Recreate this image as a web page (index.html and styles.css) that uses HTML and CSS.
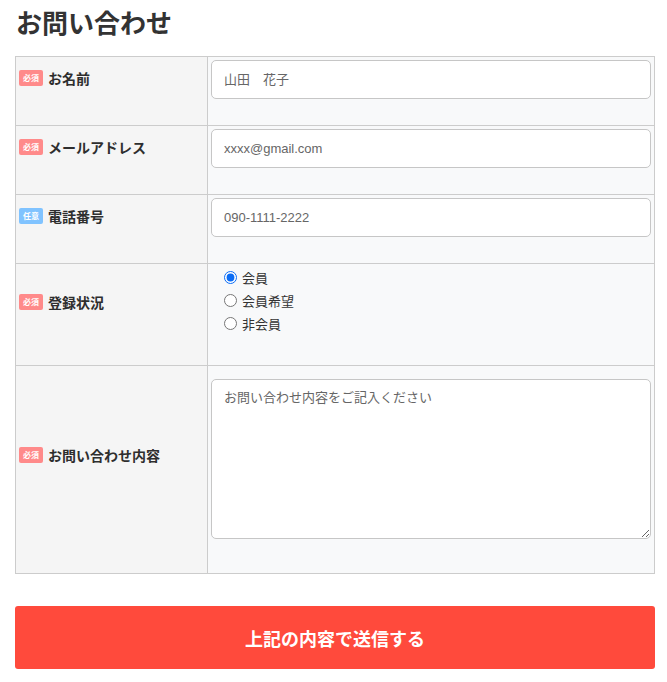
FILE: index.html
```html
<!DOCTYPE html>
<html lang="ja">
<head>
<meta charset="utf-8">
<title>お問い合わせ</title>
<link rel="stylesheet" href="styles.css">
</head>
<body>
<main class="page">
  <h1 class="page-title">お問い合わせ</h1>
  <form class="contact-form">
    <table class="form-table">
      <colgroup>
        <col class="col-label">
        <col class="col-field">
      </colgroup>
      <tbody>
        <tr>
          <th class="label-cell"><span class="badge badge-required">必須</span><span class="label-text">お名前</span></th>
          <td class="field-cell"><input class="text-input" type="text" placeholder="山田　花子"></td>
        </tr>
        <tr>
          <th class="label-cell"><span class="badge badge-required">必須</span><span class="label-text">メールアドレス</span></th>
          <td class="field-cell"><input class="text-input" type="email" placeholder="xxxx@gmail.com"></td>
        </tr>
        <tr>
          <th class="label-cell"><span class="badge badge-optional">任意</span><span class="label-text">電話番号</span></th>
          <td class="field-cell"><input class="text-input" type="tel" placeholder="090-1111-2222"></td>
        </tr>
        <tr>
          <th class="label-cell"><span class="badge badge-required">必須</span><span class="label-text">登録状況</span></th>
          <td class="field-cell field-cell-radio">
            <div class="radio-group">
              <label class="radio-item"><input class="radio" type="radio" name="status" checked>会員</label>
              <label class="radio-item"><input class="radio" type="radio" name="status">会員希望</label>
              <label class="radio-item"><input class="radio" type="radio" name="status">非会員</label>
            </div>
          </td>
        </tr>
        <tr>
          <th class="label-cell label-cell-tall"><span class="badge badge-required">必須</span><span class="label-text">お問い合わせ内容</span></th>
          <td class="field-cell field-cell-textarea"><textarea class="text-area" placeholder="お問い合わせ内容をご記入ください"></textarea></td>
        </tr>
      </tbody>
    </table>
    <button class="submit-button" type="submit">上記の内容で送信する</button>
  </form>
</main>
</body>
</html>
```

FILE: styles.css
```css
* {
  box-sizing: border-box;
}

html, body {
  margin: 0;
  padding: 0;
  background: #ffffff;
}

body {
  font-family: "Liberation Sans", "Noto Sans CJK JP", sans-serif;
  color: #333333;
}

.page {
  padding: 0 12px 0 15px;
  width: 667px;
}

.page-title {
  margin: 0;
  padding: 4px 0 0 1px;
  height: 56px;
  font-family: "Noto Sans CJK JP", sans-serif;
  font-size: 26px;
  line-height: 36px;
  font-weight: 700;
  color: #333333;
}

.contact-form {
  display: flex;
  flex-direction: column;
  gap: 32px;
  width: 640px;
}

.form-table {
  width: 640px;
  border-collapse: collapse;
  table-layout: fixed;
}

.col-label {
  width: 192px;
}

.label-cell {
  background: #f5f5f5;
  border: 1px solid #cccccc;
  padding: 0 4px 26px 3px;
  vertical-align: middle;
  text-align: left;
  font-weight: 700;
  white-space: nowrap;
}

.label-cell-tall {
  padding-bottom: 30px;
}

.badge {
  display: inline-block;
  vertical-align: middle;
  width: 24px;
  height: 16px;
  border-radius: 2px;
  font-family: "Noto Sans CJK JP", sans-serif;
  font-size: 8px;
  line-height: 16px;
  font-weight: 700;
  color: #ffffff;
  text-align: center;
}

.badge-required {
  background: #ff8a8a;
}

.badge-optional {
  background: #80c3ff;
}

.label-text {
  display: inline-block;
  vertical-align: middle;
  margin-left: 5px;
  font-family: "Noto Sans CJK JP", sans-serif;
  font-size: 14px;
  line-height: 20px;
  color: #2e2e2e;
}

.field-cell {
  background: #f8f9fa;
  border: 1px solid #cccccc;
  padding: 3px 3px 26px 3px;
  vertical-align: top;
}

.text-input {
  display: block;
  width: 100%;
  height: 39px;
  margin: 0;
  padding: 0 12px;
  border: 1px solid #c6c6c6;
  border-radius: 5px;
  background: #ffffff;
  font-family: "Liberation Sans", "Noto Sans CJK JP", sans-serif;
  font-size: 13px;
  color: #555555;
  outline: none;
}

.text-input::placeholder,
.text-area::placeholder {
  color: #666666;
  opacity: 1;
}

.field-cell-radio {
  padding: 2px 3px 30px 16px;
}

.radio-group {
  display: flex;
  flex-direction: column;
}

.radio-item {
  display: flex;
  align-items: center;
  height: 23px;
  font-family: "Noto Sans CJK JP", sans-serif;
  font-size: 13px;
  color: #333333;
}

.radio {
  width: 13px;
  height: 13px;
  margin: 0 5px 0 0;
  accent-color: #0a6cf5;
}

.field-cell-textarea {
  padding: 13px 3px 34px 3px;
}

.text-area {
  display: block;
  width: 100%;
  height: 160px;
  margin: 0;
  padding: 7px 12px;
  border: 1px solid #c6c6c6;
  border-radius: 5px;
  background: #ffffff;
  font-family: "Noto Sans CJK JP", sans-serif;
  font-size: 13px;
  line-height: 20px;
  color: #555555;
  resize: vertical;
  outline: none;
}

.submit-button {
  display: block;
  width: 640px;
  height: 63px;
  margin: 0;
  padding: 0;
  border: none;
  border-radius: 3px;
  background: #ff4a3c;
  color: #ffffff;
  font-family: "Noto Sans CJK JP", sans-serif;
  font-size: 18px;
  font-weight: 700;
  cursor: pointer;
}
```
